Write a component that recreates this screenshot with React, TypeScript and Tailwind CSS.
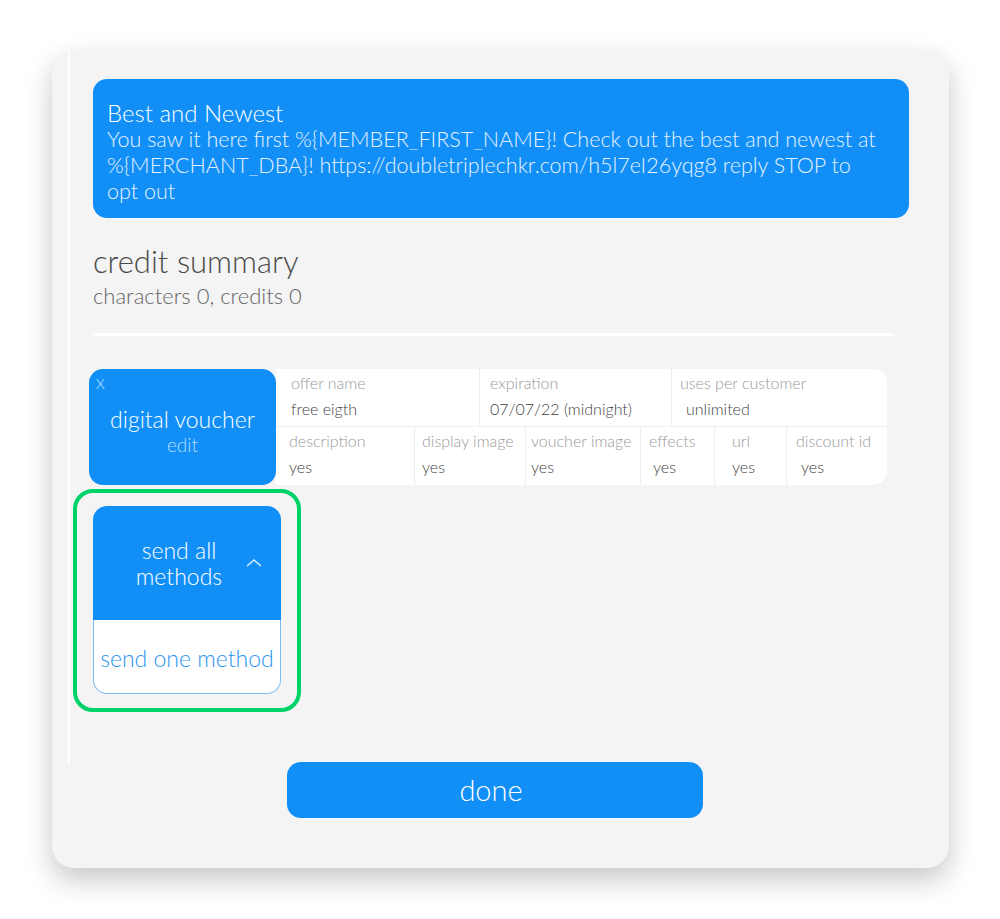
import { FC } from 'react';

const font = { fontFamily: 'Lato, "Open Sans", sans-serif' };

interface ICellProps {
  label: string;
  value: string;
  className: string;
  labelPad: string;
  valuePad: string;
}

const Cell: FC<ICellProps> = ({ label, value, className, labelPad, valuePad }) => (
  <div className={`flex flex-col pt-[4px] ${className}`}>
    <span className={`text-[16px] font-light leading-[20px] text-[#9a9a9a] whitespace-nowrap ${labelPad}`}>{label}</span>
    <span className={`mt-[6px] text-[16px] font-light leading-[20px] text-[#3f3f3f] whitespace-nowrap ${valuePad}`}>{value}</span>
  </div>
);

const App: FC = () => {
  return (
    <div className="min-h-[919px] w-[1000px] bg-white pt-[50px]" style={font}>
      <div className="ml-[52px] flex h-[818px] w-[897px] flex-col rounded-[22px] bg-[#f4f4f4] shadow-[0_12px_28px_rgba(0,0,0,0.22)]">
        <div className="ml-[16px] h-[713px] border-l-[2px] border-white pl-[23px] pr-[40px] pt-[29px]">
          <div className="w-[816px] rounded-[14px] bg-[#118ff7] px-[14px] pb-[14px] pt-[21px] text-white">
            <h1 className="text-[24px] font-light leading-[26px]">Best and Newest</h1>
            <p className="text-[21.5px] font-light leading-[26px] text-[#e6f2ff]">
              You saw it here first %{'{'}MEMBER_FIRST_NAME{'}'}! Check out the best and newest at
              <br />
              %{'{'}MERCHANT_DBA{'}'}! https://doubletriplechkr.com/h5l7eI26yqg8 reply STOP to
              <br />
              opt out
            </p>
          </div>

          <h2 className="mt-[26px] text-[31px] font-light leading-[34px] text-[#4a4a4a]">credit summary</h2>
          <p className="mt-[4px] text-[22px] font-light leading-[28px] text-[#666666]">characters 0, credits 0</p>
          <div className="mt-[23px] h-[3px] w-[800px] bg-white" />

          <div className="ml-[-4px] mt-[33px] flex h-[116px]">
            <div className="relative flex w-[187px] flex-col items-center justify-center rounded-[14px] bg-[#118ff7] pt-[10px] text-white">
              <span className="absolute left-[7px] top-[4px] text-[14px] font-light text-[#cfe6ff]">X</span>
              <span className="text-[23px] font-light leading-[26px]">digital voucher</span>
              <span className="text-[19px] font-light leading-[26px] text-[#b9dcff]">edit</span>
            </div>
            <div className="flex w-[611px] flex-col rounded-r-[14px] bg-white">
              <div className="flex h-[58px] border-b border-[#eeeeee]">
                <Cell label="offer name" value="free eigth" className="w-[204px] border-r border-[#eeeeee]" labelPad="pl-[15px]" valuePad="pl-[15px]" />
                <Cell label="expiration" value="07/07/22 (midnight)" className="w-[192px] border-r border-[#eeeeee]" labelPad="pl-[10px]" valuePad="pl-[10px]" />
                <Cell label="uses per customer" value="unlimited" className="flex-1" labelPad="pl-[8px]" valuePad="pl-[14px]" />
              </div>
              <div className="flex h-[58px]">
                <Cell label="description" value="yes" className="w-[139px] border-r border-[#eeeeee]" labelPad="pl-[13px]" valuePad="pl-[13px]" />
                <Cell label="display image" value="yes" className="w-[111px] border-r border-[#eeeeee]" labelPad="pl-[7px]" valuePad="pl-[7px]" />
                <Cell label="voucher image" value="yes" className="w-[115px] border-r border-[#eeeeee]" labelPad="pl-[5px]" valuePad="pl-[5px]" />
                <Cell label="effects" value="yes" className="w-[74px] border-r border-[#eeeeee]" labelPad="pl-[8px]" valuePad="pl-[12px]" />
                <Cell label="url" value="yes" className="w-[72px] border-r border-[#eeeeee]" labelPad="pl-[17px]" valuePad="pl-[17px]" />
                <Cell label="discount id" value="yes" className="flex-1" labelPad="pl-[9px]" valuePad="pl-[14px]" />
              </div>
            </div>
          </div>

          <div className="ml-[-20px] mt-[4px] w-[228px] rounded-[20px] border-[4px] border-[#00d26a] px-[16px] pb-[14px] pt-[13px]">
            <div className="flex h-[114px] items-center rounded-t-[14px] bg-[#118ff7] text-white">
              <span className="flex-1 pl-[20px] text-center text-[23px] font-light leading-[26px]">
                send all
                <br />
                methods
              </span>
              <svg className="mr-[18px] h-[12px] w-[18px]" viewBox="0 0 18 12" fill="none" stroke="#d6ebff" strokeWidth="1.6">
                <path d="M2 9 L9 3 L16 9" />
              </svg>
            </div>
            <div className="flex h-[74px] items-center justify-center rounded-b-[14px] border border-t-0 border-[#7bbcf5] bg-white pt-[4px]">
              <span className="text-[23px] font-light text-[#2a95f2]">send one method</span>
            </div>
          </div>
        </div>

        <button className="ml-[235px] mt-[-1px] h-[56px] w-[416px] rounded-[14px] bg-[#118ff7] pr-[8px] text-[29px] font-light text-white">
          done
        </button>
      </div>
    </div>
  );
};

export default App;
